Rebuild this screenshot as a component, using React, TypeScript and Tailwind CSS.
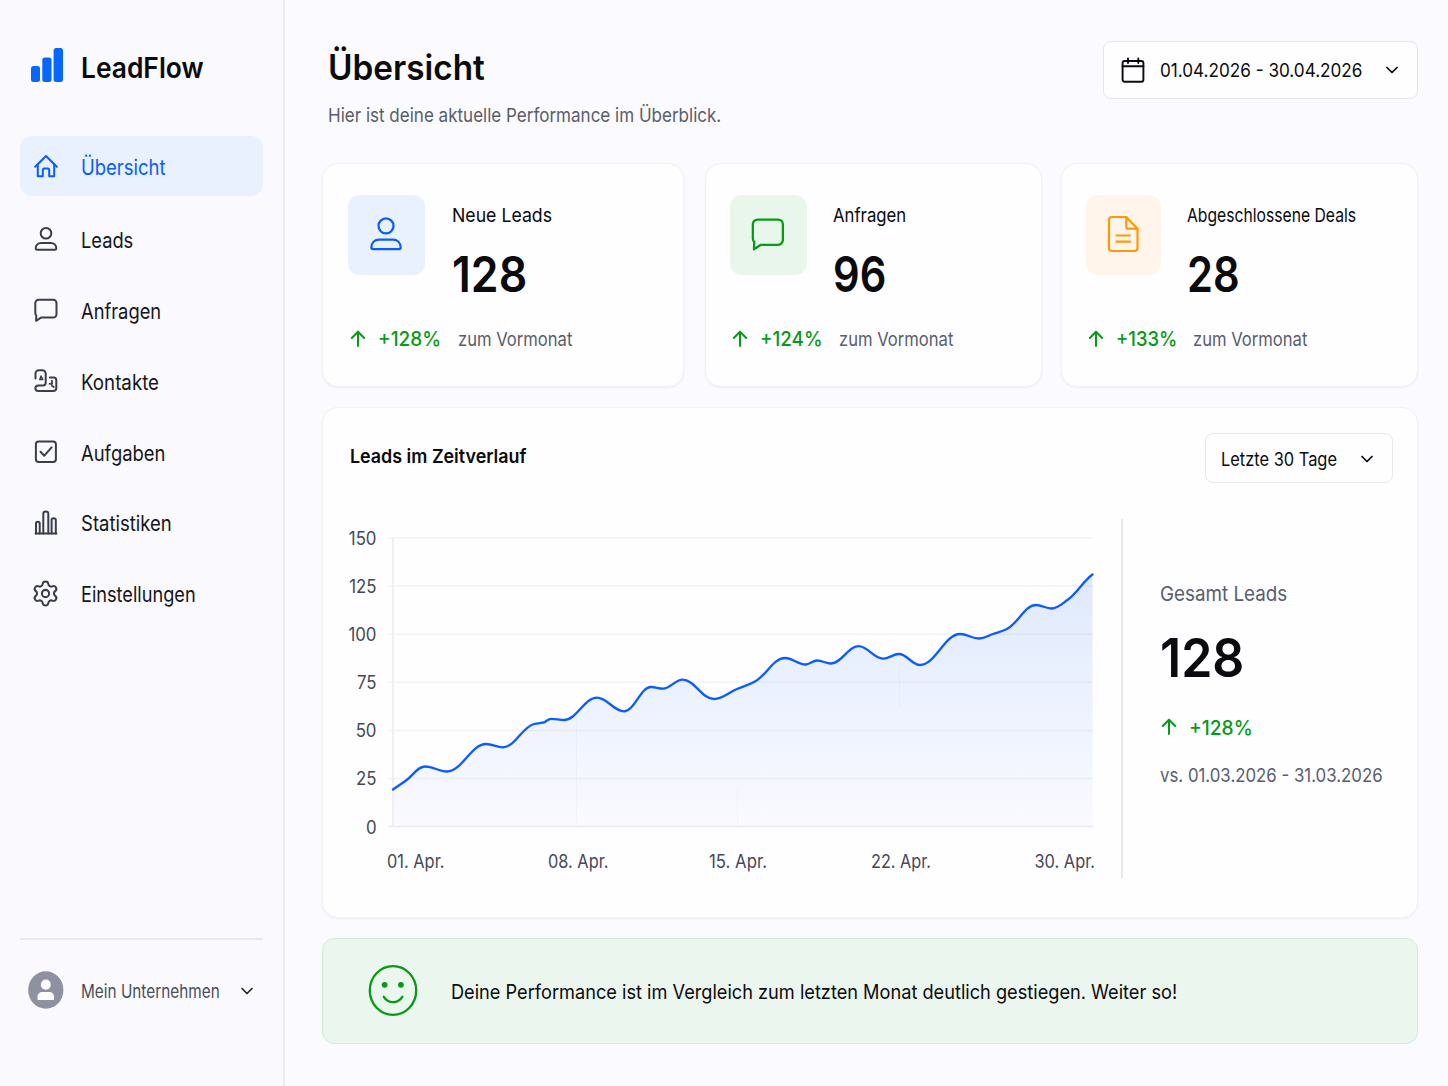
import React from "react";
import { ChevronDown, Settings } from "lucide-react";
import clsx from "clsx";

type IconProps = { className?: string; strokeWidth?: number };

/* Icons */
function Svg({
  className = "size-6",
  strokeWidth = 1.9,
  children,
}: IconProps & { children: React.ReactNode }) {
  return (
    <svg
      viewBox="0 0 24 24"
      fill="none"
      stroke="currentColor"
      strokeWidth={strokeWidth}
      strokeLinecap="round"
      strokeLinejoin="round"
      className={clsx("shrink-0 overflow-visible", className)}
    >
      {children}
    </svg>
  );
}

const HomeIcon = (props: IconProps) => (
  <Svg {...props}>
    <path d="M1.2 12.8 12 2 22.8 12.8" />
    <path d="M3.8 10.6v11.6h5v-6.2c0-.9.6-1.5 1.5-1.5h3.4c.9 0 1.5.6 1.5 1.5v6.2h5V10.6" />
  </Svg>
);

const PersonIcon = (props: IconProps) => (
  <Svg {...props}>
    <circle cx="12" cy="6.3" r="5.3" />
    <path d="M1.7 21.6c0-3.6 2.4-5.6 5.4-5.6h9.8c3 0 5.4 2 5.4 5.6 0 .7-.4 1.1-1.1 1.1H2.8c-.7 0-1.1-.4-1.1-1.1z" />
  </Svg>
);

const ChatIcon = (props: IconProps) => (
  <Svg {...props}>
    <path d="M4.6 1.8h14.6a3.3 3.3 0 0 1 3.3 3.3v11.2a3.3 3.3 0 0 1-3.3 3.3H7l-4.9 3.2.2-5.3a3 3 0 0 1-1-2.2V5.1a3.3 3.3 0 0 1 3.3-3.3z" />
  </Svg>
);

const ContactsIcon = (props: IconProps) => (
  <Svg {...props}>
    <path d="M1.5 9.5v-5a3.3 3.3 0 0 1 3.3-3.3h3.6a3.3 3.3 0 0 1 3.3 3.3v9.2a2.8 2.8 0 0 1-2.8 2.8H4.2a2.8 2.8 0 0 0 0 5.6h15a3.1 3.1 0 0 0 3.1-3.1v-8a2.6 2.6 0 0 0-2.6-2.6h-3.8" />
    <path strokeWidth="1.5" d="m5.8 10.4 1.2-3.4 1.8 3.4z" />
    <path strokeWidth="1.8" d="M18 11.6v2.2M15.6 14.8h2.6M17.8 16.8l2 1.2" />
  </Svg>
);

const TaskIcon = (props: IconProps) => (
  <Svg {...props}>
    <rect x="1.9" y="1.4" width="20" height="20.6" rx="2.8" />
    <path d="m6.5 11.8 3.8 3.9 7.3-8.3" />
  </Svg>
);

const StatsIcon = (props: IconProps) => (
  <Svg {...props}>
    <path d="M1.6 22.4h20.800" />
    <path d="M2 22.400V12.300c0-1 .7-1.600 1.800-1.600s1.900.6 1.900 1.600v10.100M9.300 22.400V2.600c0-1.200.9-2 2.500-2s2.500.8 2.500 2v19.800M17.600 22.400V8.800c0-1 .8-1.600 2.100-1.600 1.200 0 2.100.6 2.100 1.600v13.600" />
  </Svg>
);

function DocumentIcon() {
  return (
    <svg
      viewBox="0 0 32 38"
      fill="none"
      stroke="currentColor"
      strokeWidth="2.2"
      strokeLinecap="round"
      strokeLinejoin="round"
      className="w-8 h-[38px]"
    >
      <path d="M19 2H5a3 3 0 0 0-3 3v28a3 3 0 0 0 3 3h22.500a3 3 0 0 0 3-3V13.700z" />
      <path d="M19.300 2v9.700a2 2 0 0 0 2 2h9" />
      <path d="M9.500 20.500h13.500M9.500 26.700h13.500" />
    </svg>
  );
}

function CalendarIcon() {
  return (
    <svg
      viewBox="0 0 24 26"
      fill="none"
      stroke="currentColor"
      strokeWidth="1.9"
      strokeLinecap="round"
      className="w-6 h-[26px]"
    >
      <rect x="1.6" y="4" width="20.8" height="20.7" rx="2" />
      <path d="M1.600 9.300h20.800M7 1.500V6M17.300 1.500V6" />
    </svg>
  );
}

function ArrowUp() {
  return (
    <svg
      viewBox="0 0 14 16"
      fill="none"
      stroke="currentColor"
      strokeWidth="2"
      strokeLinecap="round"
      strokeLinejoin="round"
      className="w-[14px] h-4 shrink-0 overflow-visible"
    >
      <path d="M.8 7 7 .7 13.200 7M7 .7v14.300" />
    </svg>
  );
}

const navItems = [
  { label: "Übersicht", Icon: HomeIcon, text: "mt-[3px] scale-x-[0.880]", active: true },
  { label: "Leads", Icon: PersonIcon, text: "mt-[3px] scale-x-[0.870]" },
  { label: "Anfragen", Icon: ChatIcon, text: "mt-[3px] scale-x-[0.872]" },
  { label: "Kontakte", Icon: ContactsIcon, text: "mt-[3px] scale-x-[0.892]" },
  { label: "Aufgaben", Icon: TaskIcon, text: "mt-[3px] scale-x-[0.878]" },
  { label: "Statistiken", Icon: StatsIcon, text: "mt-[2px] scale-x-[0.882]" },
  { label: "Einstellungen", Icon: Settings, text: "mt-[2px] scale-x-[0.864]" },
];

const stats = [
  {
    label: "Neue Leads",
    value: "128",
    change: "+128%",
    icon: <PersonIcon className="size-[34px]" strokeWidth={1.6} />,
    card: "w-[362px] pl-[25px]",
    tile: "w-[77px] pr-px bg-[#e9f0fe] text-[#0a5cff]",
    labelBox: "ml-[27px]",
    labelScale: "scale-x-[0.931]",
    valueScale: "scale-x-[0.910]",
    changeScale: "scale-x-[0.950]",
    changeBox: "w-20",
  },
  {
    label: "Anfragen",
    value: "96",
    change: "+124%",
    icon: <ChatIcon className="size-[34px]" strokeWidth={1.6} />,
    card: "w-[337px] ml-[21px] pl-6",
    tile: "w-[77px] pr-[2px] bg-[#e9f6ec] text-[#079a14]",
    labelBox: "ml-[26px]",
    labelScale: "scale-x-[0.880]",
    valueScale: "scale-x-[0.850]",
    changeScale: "scale-x-[0.938]",
    changeBox: "w-[79px]",
  },
  {
    label: "Abgeschlossene Deals",
    value: "28",
    change: "+133%",
    icon: <DocumentIcon />,
    card: "w-[357px] ml-[19px] pl-6",
    tile: "w-[75px] pr-[2px] bg-[#fff5ea] text-[#ff9808]",
    labelBox: "ml-[26px]",
    labelScale: "scale-x-[0.826]",
    valueScale: "scale-x-[0.850]",
    changeScale: "scale-x-[0.920]",
    changeBox: "w-[77px]",
  },
];

/* Chart */
const yTicks = [150, 125, 100, 75, 50, 25, 0];

const xTicks = [
  { label: "01. Apr.", x: -6, width: 57.5 },
  { label: "08. Apr.", x: 155, width: 60.5 },
  { label: "15. Apr.", x: 316, width: 58 },
  { label: "22. Apr.", x: 478, width: 60 },
  { label: "30. Apr.", x: 641.5, width: 60.5 },
];

const points = [
  [0, 251.5], [13, 242.5], [32, 228.5], [54, 233.5], [93, 206], [110, 209.3],
  [141, 186], [150, 184.7], [158, 180.8], [171, 182], [204, 159.7], [231, 173.3],
  [258, 149], [270, 150.7], [289.5, 141.7], [321, 161], [344, 151], [362, 143.5],
  [392, 120], [412.5, 126.5], [424, 122.5], [438, 125.5], [465.5, 108.2], [490, 120.7],
  [506, 116], [527, 127], [567, 96], [586, 100.5], [600, 96], [614, 91],
  [643, 67], [658.5, 70.5], [675, 61.5], [699.5, 36.5],
];

// monotone cubic interpolation, flat at the local extremes
function smoothPath(pts: number[][]) {
  const slope = pts.slice(1).map((p, i) => (p[1] - pts[i][1]) / (p[0] - pts[i][0]));
  const tangent = pts.map((_, i) => {
    if (i === 0) return slope[0];
    if (i === pts.length - 1) return slope[i - 1] * 0.7;
    const a = slope[i - 1];
    const b = slope[i];
    return a * b <= 0 ? 0 : (2 * a * b) / (a + b);
  });
  let d = `M${pts[0][0]} ${pts[0][1]}`;
  for (let i = 1; i < pts.length; i++) {
    const [x0, y0] = pts[i - 1];
    const [x1, y1] = pts[i];
    const h = (x1 - x0) / 2.6;
    d += `C${x0 + h} ${y0 + tangent[i - 1] * h} ${x1 - h} ${y1 - tangent[i] * h} ${x1} ${y1}`;
  }
  return d;
}

function LeadsChart() {
  const line = smoothPath(points);

  return (
    <svg width="798" height="359" viewBox="0 0 798 359" className="shrink-0">
      <defs>
        <linearGradient id="area" x1="0" y1="36" x2="0" y2="288" gradientUnits="userSpaceOnUse">
          <stop offset="0" stopColor="#dfe9fd" />
          <stop offset="0.45" stopColor="#ebf1fe" />
          <stop offset="1" stopColor="#fafaff" />
        </linearGradient>
      </defs>
      <g transform="translate(70 19)">
        <path d={`${line}V288.500H0Z`} fill="url(#area)" />
        {yTicks.map((tick, i) => (
          <line
            key={tick}
            x1="-5"
            x2="700"
            y1={i * 48.1}
            y2={i * 48.1}
            stroke="#5a6488"
            strokeOpacity={tick === 0 ? 0.12 : 0.075}
            strokeWidth="1.5"
          />
        ))}
        <path d="M0 0V288" stroke="#e9ebf2" strokeWidth="1.5" />
        <path d="M183.500 184V288M344.500 250V288M506.500 125V170" stroke="#5a6488" strokeOpacity="0.04" />
        <path d={line} fill="none" stroke="#0a5cff" strokeWidth="2.3" strokeLinecap="round" />
        <g fill="#464a55" fontSize="18.5">
          {yTicks.map((tick, i) => (
            <text
              key={tick}
              transform={`translate(-16.5 ${i * 48.15 + 6.6}) scale(0.91 1)`}
              textAnchor="end"
            >
              {tick}
            </text>
          ))}
          {xTicks.map((tick) => (
            <text
              key={tick.label}
              x={tick.x}
              y="330"
              textLength={tick.width}
              lengthAdjust="spacingAndGlyphs"
            >
              {tick.label}
            </text>
          ))}
        </g>
      </g>
    </svg>
  );
}

function Sidebar() {
  return (
    <aside className="w-[285px] shrink-0 border-r-2 border-[#ebebf3] bg-[#faf9fe] pl-5 flex flex-col">
      {/* Logo */}
      <div className="mt-[47px] h-10 pl-[11px] flex items-center">
        <svg width="32" height="34" viewBox="0 0 32 34" fill="#0667ff" className="-mt-[5px]">
          <rect x="0" y="18" width="9" height="16" rx="2.5" />
          <rect x="11.3" y="9.5" width="9.2" height="24.5" rx="2.5" />
          <rect x="22.6" y="0" width="9.4" height="34" rx="2.5" />
        </svg>
        <span className="ml-[18px] mt-px origin-left scale-x-[0.942] text-[28px] font-semibold text-[#0b0b0d]">
          LeadFlow
        </span>
      </div>

      {/* Navigation */}
      <nav className="mt-[49px]">
        <ul className="flex flex-col gap-[11px]">
          {navItems.map(({ label, Icon, text, active }) => (
            <li
              key={label}
              className={clsx(
                "w-[243px] h-[60px] pl-[13px] flex items-center rounded-xl",
                active ? "mb-[2px] bg-[#e9f0fe] text-[#0a5cff]" : "text-[#3a3e4c]",
              )}
            >
              <span className="w-[26px] flex justify-center">
                <Icon
                  className={Icon === Settings ? "size-[29px] -mt-[2px] -ml-px shrink-0" : "size-6"}
                  strokeWidth={Icon === Settings ? 1.7 : 2}
                />
              </span>
              <span
                className={clsx(
                  "ml-[22px] origin-left text-[21px] leading-7",
                  text,
                  !active && "text-[#15161a]",
                )}
              >
                {label}
              </span>
            </li>
          ))}
        </ul>
      </nav>

      {/* Account */}
      <div className="mt-auto mb-[77px] w-[243px] border-t-2 border-[#e8e9f0] pt-[31px] pl-2 flex items-center">
        <svg width="36" height="38" viewBox="0 0 36 38" className="shrink-0">
          <ellipse cx="17.8" cy="19" rx="17.6" ry="18.8" fill="#8e92a0" />
          <ellipse cx="17.8" cy="13.7" rx="5" ry="5.1" fill="#fdfdff" />
          <path d="M9.500 28v-2.200c0-3 2.300-4.800 5-4.800h6.600c2.700 0 5 1.800 5 4.800V28c0 .7-.4 1-1 1H10.500c-.6 0-1-.3-1-1z" fill="#fdfdff" />
        </svg>
        <span className="w-[156px] ml-[17px] mt-[3px] shrink-0">
          <span className="inline-block origin-left scale-x-[0.829] text-[18.5px] whitespace-nowrap text-[#4b4e59]">
            Mein Unternehmen
          </span>
        </span>
        <ChevronDown className="size-5 mt-[2px] shrink-0 text-[#26272c]" strokeWidth={2.1} />
      </div>
    </aside>
  );
}

export default function App() {
  return (
    <div className="h-[1086px] w-[1448px] overflow-hidden flex bg-[#fbfaff] font-['Inter',sans-serif] text-[#0b0b0d]">
      <Sidebar />

      <main className="flex-1 pl-[37px] pr-[30px] pt-[41px]">
        {/* Header */}
        <header className="h-[122px] flex justify-between items-start">
          <div className="pl-[6px] whitespace-nowrap">
            <h1 className="mt-[6px] origin-left scale-x-[0.952] text-[35px] leading-10 font-semibold">
              Übersicht
            </h1>
            <p className="mt-[17px] w-fit origin-left scale-x-[0.896] text-[19px] leading-6 text-[#5a5d6a]">
              Hier ist deine aktuelle Performance im Überblick.
            </p>
          </div>
          <button className="w-[315px] h-[58px] shrink-0 pl-[17px] flex items-center rounded-lg border border-[#e4e5ee] bg-[#fefdff]">
            <CalendarIcon />
            <span className="w-[222px] ml-[15px] mt-[2px] shrink-0 text-left">
              <span className="inline-block origin-left scale-x-[0.902] text-[19px] leading-6 whitespace-nowrap">
                01.04.2026 - 30.04.2026
              </span>
            </span>
            <ChevronDown className="size-5 shrink-0" strokeWidth={2.1} />
          </button>
        </header>

        {/* Stat cards */}
        <div className="flex">
          {stats.map((stat) => (
            <section
              key={stat.label}
              className={clsx(
                "h-[224px] shrink-0 pt-[31px] rounded-2xl border border-[#f1f1f6] bg-[#fefdff] shadow-sm shadow-[#2030600c]",
                stat.card,
              )}
            >
              <div className="flex items-start">
                <div
                  className={clsx(
                    "h-20 shrink-0 pb-[2px] rounded-xl flex items-center justify-center",
                    stat.tile,
                  )}
                >
                  {stat.icon}
                </div>
                <div className={clsx("whitespace-nowrap", stat.labelBox)}>
                  <p className={clsx("mt-[9px] w-fit origin-left text-[19px] leading-6", stat.labelScale)}>
                    {stat.label}
                  </p>
                  <p
                    className={clsx(
                      "mt-[22px] w-fit origin-left text-[49px] leading-[49px] font-semibold",
                      stat.valueScale,
                    )}
                  >
                    {stat.value}
                  </p>
                </div>
              </div>
              <div className="mt-7 h-6 pl-[3px] flex items-center whitespace-nowrap">
                <span className="text-[#079a14]">
                  <ArrowUp />
                </span>
                <span className={clsx("ml-[13px] shrink-0", stat.changeBox)}>
                  <span
                    className={clsx(
                      "inline-block origin-left text-[20px] leading-6 font-medium text-[#079a14]",
                      stat.changeScale,
                    )}
                  >
                    {stat.change}
                  </span>
                </span>
                <span className="mt-[2px] origin-left scale-x-[0.874] text-[19px] leading-6 text-[#5a5d6a]">
                  zum Vormonat
                </span>
              </div>
            </section>
          ))}
        </div>

        {/* Leads over time */}
        <section className="mt-5 h-[511px] rounded-2xl border border-[#f1f1f6] bg-[#fefdff] shadow-sm shadow-[#2030600c]">
          <div className="pt-[25px] pl-[27px] pr-6 flex items-start justify-between">
            <h2 className="mt-3 origin-left scale-x-[0.941] text-[19px] leading-6 font-semibold">
              Leads im Zeitverlauf
            </h2>
            <button className="w-[188px] h-[50px] pl-[15px] flex items-center rounded-lg border border-[#e6e7ef]">
              <span className="w-[136px] shrink-0 mt-[2px] text-left">
                <span className="inline-block origin-left scale-x-[0.887] text-[18.5px] leading-6 whitespace-nowrap">
                  Letzte 30 Tage
                </span>
              </span>
              <ChevronDown className="size-5 mt-px shrink-0" strokeWidth={2.1} />
            </button>
          </div>
          <div className="mt-9 flex">
            <LeadsChart />
            <div className="w-[294px] h-[359px] border-l-2 border-[#e6e7ef] pl-[37px] pt-[63px] whitespace-nowrap">
              <p className="w-fit origin-left scale-x-[0.918] text-[20.5px] leading-6 text-[#5a5d6a]">
                Gesamt Leads
              </p>
              <p className="mt-[25px] w-fit origin-left scale-x-[0.927] text-[54px] leading-[54px] font-semibold">
                128
              </p>
              <div className="mt-[30px] h-6 pl-[2px] flex items-center text-[#079a14]">
                <ArrowUp />
                <span className="ml-[13px] mt-px origin-left scale-x-[0.960] text-[20px] leading-6 font-medium">
                  +128%
                </span>
              </div>
              <p className="mt-[25px] w-fit origin-left scale-x-[0.885] text-[19px] leading-6 text-[#5a5d6a]">
                vs. 01.03.2026 - 31.03.2026
              </p>
            </div>
          </div>
        </section>

        {/* Summary banner */}
        <div className="mt-5 h-[106px] pl-[45px] flex items-center rounded-xl border border-[#d2ecd9] bg-[#ebf6ee]">
          <svg
            width="50"
            height="52"
            viewBox="0 0 50 52"
            fill="none"
            stroke="#079a14"
            strokeWidth="2.3"
            strokeLinecap="round"
            className="shrink-0"
          >
            <ellipse cx="25" cy="25.5" rx="23.2" ry="24.3" />
            <circle cx="16.6" cy="19.8" r="2.9" fill="#079a14" stroke="none" />
            <circle cx="32.9" cy="19.8" r="2.9" fill="#079a14" stroke="none" />
            <path d="M15.800 31.800c4.300 7 14.200 7 18.500 0" />
          </svg>
          <p className="ml-[33px] mt-[2px] origin-left scale-x-[0.909] text-[20px] leading-6 whitespace-nowrap">
            Deine Performance ist im Vergleich zum letzten Monat deutlich gestiegen. Weiter so!
          </p>
        </div>
      </main>
    </div>
  );
}
